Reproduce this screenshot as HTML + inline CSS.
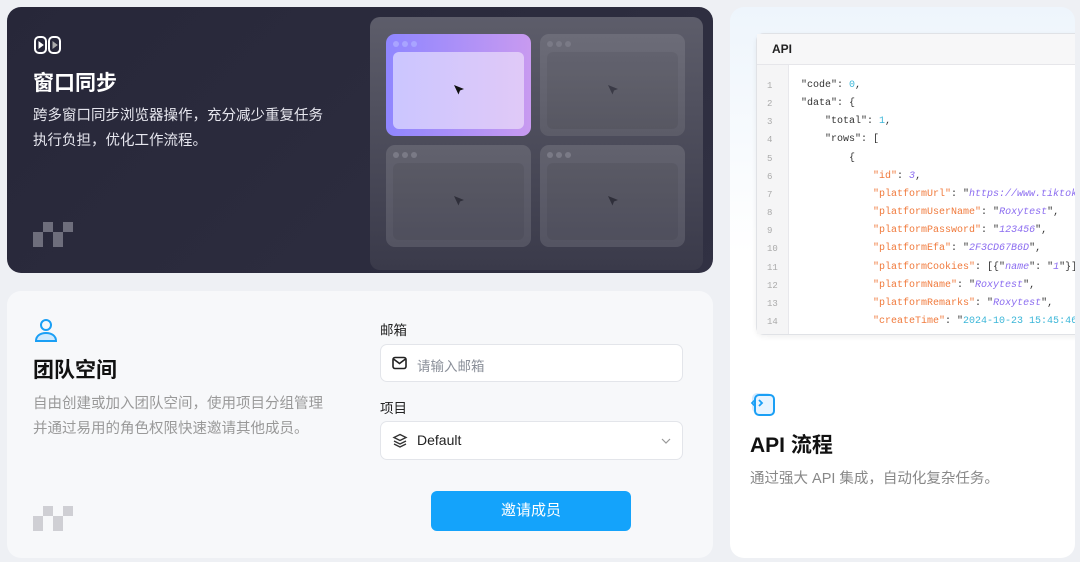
<!DOCTYPE html>
<html><head><meta charset="utf-8"><style>
*{margin:0;padding:0;box-sizing:border-box}
body{width:1080px;height:562px;background:#eef0f4;font-family:"Liberation Sans","Noto Sans CJK SC",sans-serif;position:relative;overflow:hidden}
.abs{position:absolute}
#c1{left:7px;top:7px;width:706px;height:266px;border-radius:14px;background:linear-gradient(135deg,#272739,#2c2c3e 60%,#313143);overflow:hidden}
#c2{left:7px;top:291px;width:706px;height:267px;border-radius:14px;background:#f7f8fa}
#c3{left:730px;top:7px;width:345px;height:551px;border-radius:14px;background:linear-gradient(180deg,#eef5fc 0,#fff 45%);overflow:hidden}
.h{font-weight:bold;font-size:21px}
.p{font-size:14.5px;line-height:25px}
.win{position:absolute;width:145px;height:102px;border-radius:9px;background:linear-gradient(#6c6c78,#5c5c68)}
.win .d{position:absolute;top:7px;width:6px;height:6px;border-radius:50%;background:#7a7a86}
.win .in{position:absolute;left:7px;top:18px;right:7px;bottom:7px;border-radius:6px;background:rgba(0,0,0,.06)}
.win svg{position:absolute;left:67px;top:50px}
.inp{position:absolute;left:380px;width:303px;height:38px;background:#fff;border:1px solid #e3e5ea;border-radius:7px}
.code{font-family:"Liberation Mono",monospace;font-size:10px;line-height:18.15px;white-space:pre;color:#333}
.k{color:#f07a3c}.s{color:#8b6cf0;font-style:italic}.n{color:#3bb6d8}
.ln{font-family:"Liberation Mono",monospace;font-size:9px;line-height:18.15px;color:#aaa;white-space:pre}
</style></head><body>
<div id="c1" class="abs">
 <svg class="abs" style="left:27px;top:28px" width="27" height="20" viewBox="0 0 27 20" fill="none" stroke="#fff" stroke-width="2"><rect x="1" y="2" width="11" height="16" rx="4"/><rect x="15" y="2" width="11" height="16" rx="4"/><path d="M5 7l4 3-4 3z" fill="#fff" stroke-width="1"/><path d="M19 7l4 3-4 3z" fill="#aaa" stroke="#aaa" stroke-width="1"/></svg>
 <div class="abs h" style="left:26px;top:60px;color:#fff">窗口同步</div>
 <div class="abs p" style="left:26px;top:97px;color:#e6e6ee;width:320px">跨多窗口同步浏览器操作，充分减少重复任务<br>执行负担，优化工作流程。</div>
 <div class="abs" style="left:26px;top:225px;width:10px;height:15px;background:#6e6e7c"></div>
 <div class="abs" style="left:36px;top:215px;width:10px;height:10px;background:#6e6e7c"></div>
 <div class="abs" style="left:46px;top:225px;width:10px;height:15px;background:#6e6e7c"></div>
 <div class="abs" style="left:56px;top:215px;width:10px;height:10px;background:#6e6e7c"></div>
 <div class="abs" style="left:363px;top:10px;width:333px;height:253px;border-radius:10px;background:linear-gradient(#5d5d6a,#3a3a4a)">
  <div class="win" style="left:16px;top:17px;background:linear-gradient(90deg,#8f86ff,#c89af0)"><i class="d" style="left:7px;background:#a9a4ff"></i><i class="d" style="left:16px;background:#a9a4ff"></i><i class="d" style="left:25px;background:#a9a4ff"></i><div class="in" style="background:linear-gradient(90deg,#cbc6ff,#e0c9f7)"></div><svg width="12" height="12" viewBox="0 0 12 12"><path d="M1 1l10 4-4 1.5-1.5 4z" fill="#111"/></svg></div>
  <div class="win" style="left:170px;top:17px"><i class="d" style="left:7px"></i><i class="d" style="left:16px"></i><i class="d" style="left:25px"></i><div class="in"></div><svg width="12" height="12" viewBox="0 0 12 12"><path d="M1 1l10 4-4 1.5-1.5 4z" fill="#3a3a46"/></svg></div>
  <div class="win" style="left:16px;top:128px;background:linear-gradient(#62626e,#545462)"><i class="d" style="left:7px"></i><i class="d" style="left:16px"></i><i class="d" style="left:25px"></i><div class="in"></div><svg width="12" height="12" viewBox="0 0 12 12"><path d="M1 1l10 4-4 1.5-1.5 4z" fill="#2f2f3a"/></svg></div>
  <div class="win" style="left:170px;top:128px;background:linear-gradient(#62626e,#545462)"><i class="d" style="left:7px"></i><i class="d" style="left:16px"></i><i class="d" style="left:25px"></i><div class="in"></div><svg width="12" height="12" viewBox="0 0 12 12"><path d="M1 1l10 4-4 1.5-1.5 4z" fill="#2f2f3a"/></svg></div>
 </div>
</div>
<div id="c2" class="abs">
 <svg class="abs" style="left:27px;top:27px" width="24" height="25" viewBox="0 0 24 25" fill="none" stroke="#1a9ff5" stroke-width="2"><circle cx="12" cy="7" r="5"/><path d="M2 23c0-5 4-8 10-8s10 3 10 8z" fill="#cfe9fd"/></svg>
 <div class="abs h" style="left:26px;top:63px;color:#111">团队空间</div>
 <div class="abs p" style="left:26px;top:101px;color:#999;width:320px">自由创建或加入团队空间，使用项目分组管理<br>并通过易用的角色权限快速邀请其他成员。</div>
 <div class="abs" style="left:26px;top:225px;width:10px;height:15px;background:#cfcfd4"></div>
 <div class="abs" style="left:36px;top:215px;width:10px;height:10px;background:#cfcfd4"></div>
 <div class="abs" style="left:46px;top:225px;width:10px;height:15px;background:#cfcfd4"></div>
 <div class="abs" style="left:56px;top:215px;width:10px;height:10px;background:#cfcfd4"></div>
 <div class="abs" style="left:373px;top:28px;font-size:13.5px;color:#222">邮箱</div>
 <div class="inp" style="top:53px;left:373px"><svg class="abs" style="left:11px;top:11px" width="15" height="14" viewBox="0 0 15 14" fill="none" stroke="#222" stroke-width="1.6"><rect x="1" y="1.5" width="13" height="11" rx="2"/><path d="M1.5 3l6 4.5 6-4.5"/></svg><span class="abs" style="left:36px;top:10px;font-size:13.5px;color:#8a8f99">请输入邮箱</span></div>
 <div class="abs" style="left:373px;top:106px;font-size:13.5px;color:#222">项目</div>
 <div class="inp" style="top:130px;left:373px;height:39px"><svg class="abs" style="left:11px;top:11px" width="16" height="16" viewBox="0 0 16 16" fill="none" stroke="#333" stroke-width="1.4"><path d="M8 1.5l6 3-6 3-6-3z"/><path d="M2 8l6 3 6-3"/><path d="M2 11l6 3 6-3"/></svg><span class="abs" style="left:36px;top:10px;font-size:14px;color:#222">Default</span><svg class="abs" style="left:280px;top:16px" width="10" height="7" viewBox="0 0 10 7" fill="none" stroke="#999" stroke-width="1.2"><path d="M1 1l4 4 4-4"/></svg></div>
 <div class="abs" style="left:424px;top:200px;width:200px;height:40px;border-radius:6px;background:#14a3fb;color:#fff;font-size:15px;text-align:center;line-height:40px">邀请成员</div>
</div>
<div id="c3" class="abs">
 <div class="abs" style="left:26px;top:26px;width:340px;height:302px;background:#fff;border:1px solid #e0e2e6;border-radius:8px;box-shadow:0 2px 6px rgba(0,0,0,.06)">
  <div style="height:31px;background:#f7f7f8;border-bottom:1px solid #e6e6ea;font-weight:bold;font-size:12px;line-height:31px;padding-left:15px;color:#222">API</div>
  <div class="abs" style="left:0;top:31px;width:32px;bottom:0;background:#f5f5f6;border-right:1px solid #e8e8ec"></div>
  <div class="abs ln" style="left:10px;top:43px">1
2
3
4
5
6
7
8
9
10
11
12
13
14</div>
  <div class="abs code" style="left:44px;top:43px">"code": <span class="n">0</span>,
"data": {
    "total": <span class="n">1</span>,
    "rows": [
        {
            <span class="k">"id"</span>: <span class="s">3</span>,
            <span class="k">"platformUrl"</span>: "<span class="s">https://www.tiktok.com</span>",
            <span class="k">"platformUserName"</span>: "<span class="s">Roxytest</span>",
            <span class="k">"platformPassword"</span>: "<span class="s">123456</span>",
            <span class="k">"platformEfa"</span>: "<span class="s">2F3CD67B6D</span>",
            <span class="k">"platformCookies"</span>: [{"<span class="s">name</span>": "<span class="s">1</span>"}],
            <span class="k">"platformName"</span>: "<span class="s">Roxytest</span>",
            <span class="k">"platformRemarks"</span>: "<span class="s">Roxytest</span>",
            <span class="k">"createTime"</span>: "<span class="n">2024-10-23 15:45:46</span>",</div>
 </div>
 <svg class="abs" style="left:20px;top:385px" width="27" height="25" viewBox="0 0 27 25" fill="none"><rect x="2" y="1" width="20" height="20" rx="5" fill="#d4ebff"/><rect x="5" y="3" width="19" height="20" rx="4" stroke="#1a9ff5" stroke-width="2" fill="#e8f4ff"/><path d="M5 8l-3 3 3 3M9 8l3 3-3 3" stroke="#1a9ff5" stroke-width="1.8"/></svg>
 <div class="abs h" style="left:20px;top:422px;color:#111">API 流程</div>
 <div class="abs p" style="left:20px;top:460px;color:#888">通过强大 API 集成，自动化复杂任务。</div>
</div>
</body></html>
